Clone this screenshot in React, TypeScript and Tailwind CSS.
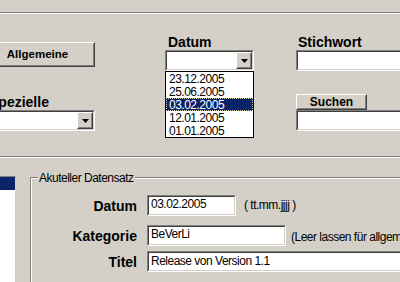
import React from 'react'

const BOLD = "font-['Liberation_Sans',Arial,sans-serif] font-bold"
const NARROW = "font-['Liberation_Sans',Arial,sans-serif] text-[12px] tracking-[-0.5px]"

function Sunken({ className = '', children }: { className?: string; children?: React.ReactNode }) {
  return (
    <div className={`border border-t-[#808080] border-l-[#808080] border-b-white border-r-white ${className}`}>
      <div className="h-full border border-t-[#404040] border-l-[#404040] border-b-[#d4d0c8] border-r-[#d4d0c8] bg-white flex">
        {children}
      </div>
    </div>
  )
}

function Raised({ className = '', children }: { className?: string; children?: React.ReactNode }) {
  return (
    <div className={`border border-t-white border-l-white border-b-[#404040] border-r-[#404040] bg-[#d4d0c8] ${className}`}>
      <div className="h-full border border-t-[#d4d0c8] border-l-[#d4d0c8] border-b-[#808080] border-r-[#808080] flex items-center justify-center">
        {children}
      </div>
    </div>
  )
}

function Arrow() {
  return (
    <Raised className="w-[16px] h-full shrink-0 ml-auto">
      <svg width="7" height="4" viewBox="0 0 7 4">
        <polygon points="0,0 7,0 3.5,4" fill="#000" />
      </svg>
    </Raised>
  )
}

function Combo({ className = '' }: { className?: string }) {
  return (
    <Sunken className={`h-[21px] ${className}`}>
      <div className="flex-1" />
      <Arrow />
    </Sunken>
  )
}

function Etched() {
  return <div className="h-[2px] border-t border-t-[#808080] border-b border-b-white" />
}

const dates = ['23.12.2005', '25.06.2005', '03.02.2005', '12.01.2005', '01.01.2005']

export default function App() {
  return (
    <div className="w-[400px] h-[282px] overflow-hidden bg-[#d4d0c8] text-black">
      <div className="h-[12px]" />
      <Etched />

      {/* Suchkriterien */}
      <div className="flex h-[142px]">
        <div className="ml-[-20px] w-[115px] shrink-0 flex flex-col">
          <Raised className="mt-[28px] h-[25px]">
            <span className={`${BOLD} text-[11.5px] leading-none`}>Allgemeine</span>
          </Raised>
          <div className={`${BOLD} mt-[27px] ml-[9px] text-[14px] leading-[16px]`}>Spezielle</div>
          <Combo />
        </div>

        <div className="ml-[70px] w-[89px] shrink-0 flex flex-col">
          <div className={`${BOLD} mt-[20px] pl-[3px] text-[14px] leading-[16px]`}>Datum</div>
          <div className="relative">
            <Combo />
            <div className={`${NARROW} absolute left-0 top-full w-[89px] border border-black bg-white leading-[13px]`}>
              {dates.map((d, i) => (
                <div
                  key={d}
                  className={
                    i === 2
                      ? 'h-[13px] pl-[2px] bg-[#0a246a] text-white border border-dotted border-[#d8d0a0]'
                      : 'h-[13px] pl-[3px] border border-transparent border-l-0'
                  }
                >
                  {d}
                </div>
              ))}
            </div>
          </div>
        </div>

        <div className="ml-[42px] w-[120px] shrink-0 flex flex-col">
          <div className={`${BOLD} mt-[20px] pl-[2px] text-[14px] leading-[16px]`}>Stichwort</div>
          <Sunken className="h-[21px]" />
          <Raised className="mt-[23px] w-[71px] h-[16px]">
            <span className={`${BOLD} text-[12px] leading-none`}>Suchen</span>
          </Raised>
          <Sunken className="h-[21px]" />
        </div>
      </div>

      <Etched />

      {/* Datensatz */}
      <div className="flex">
        <div className="mt-[18px] w-[16px] h-[120px] shrink-0 border-t border-t-[#808080] border-r border-r-[#d4d0c8] bg-white">
          <div className="h-[13px] bg-[#0a246a]" />
        </div>

        <div className="relative ml-[14px] mt-[19px] flex-1 border-t border-l border-[#808080]">
          <div className={`${NARROW} absolute left-[7px] top-[-7px] px-px bg-[#d4d0c8] leading-[15px]`}>
            Akuteller Datensatz
          </div>
          <div className="border-t border-l border-white pt-[16px] flex flex-col gap-[9px] h-[120px]">
            <div className="flex items-center">
              <div className={`${BOLD} w-[105px] text-right text-[14px] leading-[16px]`}>Datum</div>
              <Sunken className="ml-[10px] w-[89px] h-[21px]">
                <span className={`${NARROW} pl-[2px] leading-[14px]`}>03.02.2005</span>
              </Sunken>
              <span className={`${NARROW} ml-[8px] leading-[15px]`}>( tt.mm.jjjj )</span>
            </div>
            <div className="flex items-center">
              <div className={`${BOLD} w-[105px] text-right text-[14px] leading-[16px]`}>Kategorie</div>
              <Sunken className="ml-[10px] w-[139px] h-[21px]">
                <span className={`${NARROW} pl-[2px] leading-[14px]`}>BeVerLi</span>
              </Sunken>
              <span className={`${NARROW} ml-[5px] mt-[3px] leading-[15px] whitespace-nowrap`}>
                (Leer lassen für allgemeine Einträge)
              </span>
            </div>
            <div className="flex items-center -mt-[4px]">
              <div className={`${BOLD} w-[105px] text-right text-[14px] leading-[16px]`}>Titel</div>
              <Sunken className="ml-[10px] w-[300px] h-[21px] shrink-0">
                <span className={`${NARROW} pl-[2px] pt-[1px] leading-[14px] whitespace-nowrap`}>
                  Release von Version 1.1
                </span>
              </Sunken>
            </div>
          </div>
        </div>
      </div>
    </div>
  )
}
